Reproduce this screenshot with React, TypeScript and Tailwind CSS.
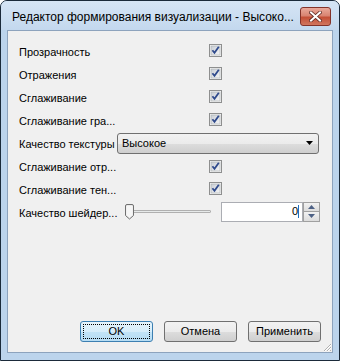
const font = { fontFamily: '"Liberation Sans", "Noto Sans", sans-serif' };

const CheckBox = () => (
  <svg width="13" height="13" viewBox="0 0 13 13" className="block">
    <defs>
      <linearGradient id="cbg" x1="0" y1="0" x2="1" y2="1">
        <stop offset="0" stopColor="#c9ced5" />
        <stop offset="1" stopColor="#f5f5f5" />
      </linearGradient>
    </defs>
    <rect x="0.5" y="0.5" width="12" height="12" fill="#f4f4f4" stroke="#8e8f8f" />
    <rect x="2" y="2" width="9" height="9" fill="url(#cbg)" stroke="#a9aeb3" strokeWidth="0.6" />
    <path d="M3.4 6.2 L5.5 8.8 L9.8 2.8" fill="none" stroke="#2f4a8c" strokeWidth="1.8" />
  </svg>
);

const Row = ({ label, h = "h-[23px]", children }: { label: string; h?: string; children?: React.ReactNode }) => (
  <div className={`flex items-center ${h}`}>
    <div className="w-[98px] shrink-0 whitespace-nowrap text-[11px] text-black pt-[3px]">{label}</div>
    <div className="flex-1 flex items-center">{children}</div>
  </div>
);

const CheckRow = ({ label, h }: { label: string; h?: string }) => (
  <Row label={label} h={h}>
    <div className="ml-[92px]">
      <CheckBox />
    </div>
  </Row>
);

const Btn = ({ children, def = false }: { children: React.ReactNode; def?: boolean }) => (
  <div
    className={`w-[73px] h-[21px] shrink-0 rounded-[3px] border flex items-center justify-center text-[11px] text-black ${
      def
        ? "border-[#3c7fb1] bg-[linear-gradient(#e5f4fc_0%,#d6edfa_50%,#c2e3f7_51%,#b6dcf3_100%)]"
        : "border-[#707070] bg-[linear-gradient(#f2f2f2_0%,#ebebeb_50%,#dddddd_51%,#cfcfcf_100%)]"
    }`}
  >
    {def ? (
      <div className="w-[67px] h-[15px] border border-dotted border-black flex items-center justify-center">{children}</div>
    ) : (
      children
    )}
  </div>
);

export default function App() {
  return (
    <div className="w-[340px] h-[361px] bg-white" style={font}>
      <div className="w-[340px] h-[361px] flex flex-col border border-[#1b2a3a] rounded-t-[7px] bg-[#bcd4ec] overflow-hidden">
        {/* title bar */}
        <div className="h-[29px] shrink-0 flex items-center pl-[11px] pr-[8px] bg-[linear-gradient(#d6e5f5,#c3d8ee)]">
          <div className="flex-1 min-w-0 overflow-hidden text-[12px] text-black whitespace-nowrap pt-[3px]">
            Редактор формирования визуализации - Высоко...
          </div>
          <div className="w-[31px] h-[19px] shrink-0 mt-[1px] rounded-[3px] border border-[#83332a] bg-[linear-gradient(#e9a99b_0%,#d98472_45%,#c44f37_55%,#d0765e_100%)] flex items-center justify-center">
            <svg width="13" height="11" viewBox="0 0 13 11">
              <path d="M2 1.5 L11 9.5 M11 1.5 L2 9.5" stroke="#5e2a24" strokeWidth="3.6" strokeLinecap="square" />
              <path d="M2 1.5 L11 9.5 M11 1.5 L2 9.5" stroke="#ffffff" strokeWidth="2" strokeLinecap="square" />
            </svg>
          </div>
        </div>

        {/* client area */}
        <div className="flex-1 mx-[6px] mb-[7px] border border-[#8da3bd] bg-[#f0f0f0] flex flex-col relative">
          <div className="pl-[11px] pt-[8px] flex flex-col">
            <CheckRow label="Прозрачность" />
            <CheckRow label="Отражения" />
            <CheckRow label="Сглаживание" />
            <CheckRow label="Сглаживание гра..." />
            <Row label="Качество текстуры" h="h-[24px]">
              <div className="w-[202px] h-[21px] rounded-[3px] border border-[#707070] bg-[linear-gradient(#f2f2f2_0%,#ebebeb_50%,#dddddd_51%,#cfcfcf_100%)] flex items-center pl-[4px] pr-[5px]">
                <span className="flex-1 text-[11px] text-black">Высокое</span>
                <svg width="7" height="4" viewBox="0 0 7 4">
                  <path d="M0 0 H7 L3.5 4 Z" fill="#000" />
                </svg>
              </div>
            </Row>
            <CheckRow label="Сглаживание отр..." h="h-[22px]" />
            <CheckRow label="Сглаживание тен..." />
            <Row label="Качество шейдер...">
              <div className="w-[96px] h-[20px] relative flex items-center">
                <div className="absolute left-[12px] right-[2px] top-[8px] h-[3px] border border-[#b0b0b0] bg-[#e7eaea] rounded-[1px]" />
                <svg width="11" height="16" viewBox="0 0 11 16" className="relative ml-[7px]">
                  <path d="M1.5 2 Q1.5 0.5 3 0.5 H8 Q9.5 0.5 9.5 2 V11.5 L5.5 15 L1.5 11.5 Z" fill="#eaeaea" stroke="#707070" />
                  <path d="M2.5 2 H8.5 V11 L5.5 13.7 L2.5 11 Z" fill="#f6f6f6" />
                </svg>
              </div>
              <div className="ml-[8px] flex">
                <div className="w-[82px] h-[20px] border border-[#abadb3] bg-white flex items-center justify-end pr-[3px]">
                  <span className="text-[11px] text-black">0</span>
                  <span className="w-[1px] h-[13px] bg-[#1f6fbf]" />
                </div>
                <div className="w-[17px] h-[20px] flex flex-col">
                  <div className="h-[10px] border border-[#a0a0a0] bg-[linear-gradient(#f2f2f2,#dcdcdc)] flex items-center justify-center">
                    <svg width="7" height="4" viewBox="0 0 7 4"><path d="M0 4 H7 L3.5 0 Z" fill="#4d6185" /></svg>
                  </div>
                  <div className="h-[10px] border border-t-0 border-[#a0a0a0] bg-[linear-gradient(#f2f2f2,#dcdcdc)] flex items-center justify-center">
                    <svg width="7" height="4" viewBox="0 0 7 4"><path d="M0 0 H7 L3.5 4 Z" fill="#4d6185" /></svg>
                  </div>
                </div>
              </div>
            </Row>
          </div>

          <div className="mt-auto flex justify-end gap-[11px] pr-[11px] pb-[10px]">
            <Btn def>OK</Btn>
            <Btn>Отмена</Btn>
            <Btn>Применить</Btn>
          </div>

          <svg width="10" height="10" viewBox="0 0 10 10" className="absolute right-[0px] bottom-[0px]">
            <path d="M9 2 L2 9 M9 5 L5 9 M9 8 L8 9" stroke="#b0b0b0" strokeWidth="1" />
            <path d="M9.5 2.5 L2.5 9.5 M9.5 5.5 L5.5 9.5" stroke="#ffffff" strokeWidth="1" />
          </svg>
        </div>
      </div>
    </div>
  );
}
